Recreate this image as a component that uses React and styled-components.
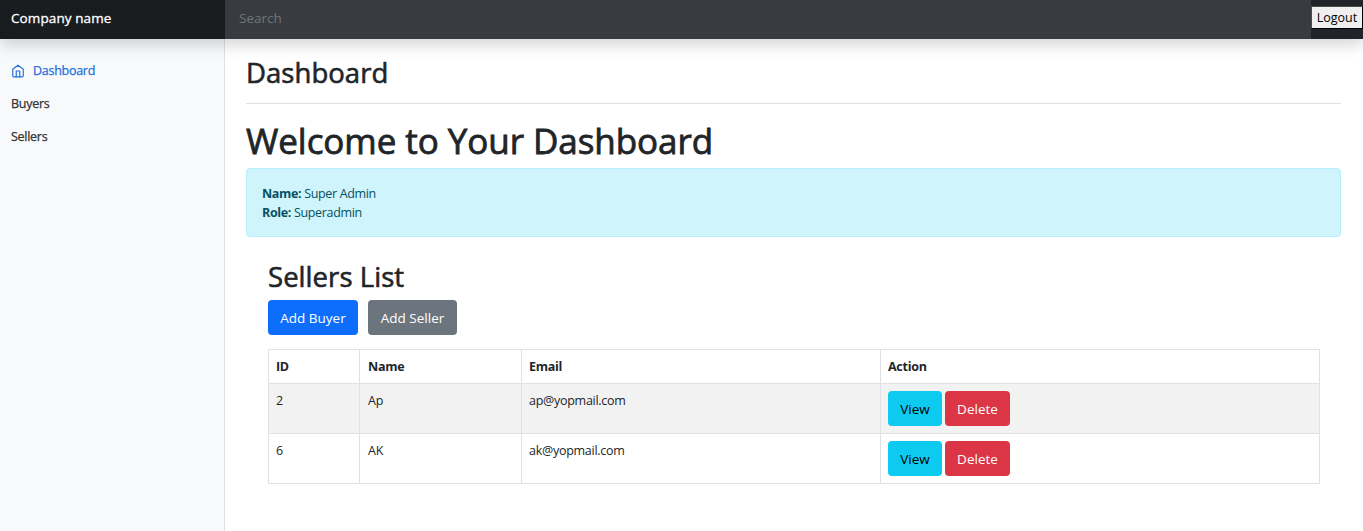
import React from "react";
import styled, { createGlobalStyle } from "styled-components";

const GlobalStyle = createGlobalStyle`
  *, *::before, *::after { box-sizing: border-box; }
  body {
    margin: 0;
    background: #fff;
    color: #212529;
    font-family: "Segoe UI", "Open Sans", "Noto Sans", sans-serif;
    font-size: 12.5px;
    line-height: 19px;
    overflow: hidden;
  }
`;

const Page = styled.div`
  display: flex;
  flex-direction: column;
  height: 531px;
`;

const Header = styled.header`
  display: flex;
  flex: none;
  height: 39px;
  background: #212529;
  box-shadow: 0 7px 14px rgba(0, 0, 0, 0.15);
  position: relative;
  z-index: 1;
`;

const Brand = styled.div`
  width: 225px;
  padding: 9px 11px;
  background: #191c1f;
  color: #fff;
  font-size: 13.5px;
  font-weight: 500;
  letter-spacing: 0.1px;
  -webkit-text-stroke: 0.3px currentColor;
`;

const Search = styled.input`
  flex: 1;
  min-width: 0;
  border: 0;
  outline: 0;
  padding: 0 14px 2px;
  background: #383b3f;
  color: #fff;
  font: inherit;
  font-size: 13.5px;
  &::placeholder { color: #6c757d; opacity: 1; }
`;

const SignOut = styled.div`
  width: 52px;
  padding: 6px 0 0;
`;

const LogoutButton = styled.button`
  display: block;
  width: 52px;
  height: 23px;
  padding: 0;
  border: 1px solid;
  border-color: #4c4c4c #000 #000 #4c4c4c;
  background: #efefef;
  color: #000;
  font: inherit;
  font-size: 12.5px;
  line-height: 20px;
`;

const Body = styled.div`
  display: flex;
  flex: 1;
`;

const Sidebar = styled.nav`
  width: 225px;
  padding: 15px 11px 0;
  border-right: 1px solid #dee2e6;
  background: #f8f9fa;
`;

const NavLink = styled.a`
  display: flex;
  align-items: center;
  gap: 8px;
  height: 33px;
  color: ${({ $active }) => ($active ? "#2470dc" : "#333")};
  font-weight: 500;
  letter-spacing: -0.27px;
  -webkit-text-stroke: 0.25px currentColor;
  svg { -webkit-text-stroke: 0; }
`;

const Main = styled.main`
  flex: 1;
  padding: 0 22px 0 21px;
`;

const PageHead = styled.div`
  height: 65px;
  padding-top: 16px;
  border-bottom: 1px solid #dee2e6;
`;

const Heading = styled.h2`
  margin: 0;
  font-size: 27.5px;
  font-weight: 500;
  line-height: 36px;
  letter-spacing: 0.05px;
  -webkit-text-stroke: 0.6px currentColor;
`;

const Welcome = styled.h1`
  margin: 16px 0 6px;
  font-size: 35px;
  font-weight: 500;
  line-height: 42px;
  letter-spacing: -0.06px;
  -webkit-text-stroke: 0.8px currentColor;
`;

const Alert = styled.div`
  height: 69px;
  padding: 15px;
  border: 1px solid #b6effb;
  border-radius: 4px;
  background: #cff4fc;
  color: #055160;
  letter-spacing: -0.34px;
`;

const Sellers = styled.section`
  padding: 22px 21px 0 22px;
`;

const Actions = styled.div`
  display: flex;
  gap: 3px;
`;

const Toolbar = styled.div`
  display: flex;
  gap: 10px;
  margin-top: 5px;
`;

const tones = {
  primary: ["#0d6efd", "#fff"],
  secondary: ["#6c757d", "#fff"],
  info: ["#0dcaf0", "#000"],
  danger: ["#dc3545", "#fff"],
};

const Button = styled.button`
  width: ${({ $width }) => $width}px;
  height: 35px;
  padding: 1px 0 0;
  border: 0;
  border-radius: 4px;
  background: ${({ $tone }) => tones[$tone][0]};
  color: ${({ $tone }) => tones[$tone][1]};
  font: inherit;
  font-size: 13.5px;
  line-height: 34px;
`;

const Table = styled.table`
  width: 1052px;
  margin-top: 14px;
  border-collapse: collapse;
  table-layout: fixed;
`;

const Row = styled.tr`
  height: ${({ $head }) => ($head ? 34 : 50)}px;
  background: ${({ $striped }) => ($striped ? "#f2f2f2" : "#fff")};
`;

const cell = `
  padding: 7px 7px 0;
  border: 1px solid #dee2e6;
  text-align: left;
  vertical-align: top;
  letter-spacing: -0.27px;
  &:nth-child(2) { padding-left: 8px; }
`;
const Th = styled.th`
  ${cell}
  font-weight: 700;
`;
const Td = styled.td`${cell}`;

const sellers = [
  { id: 2, name: "Ap", email: "ap@yopmail.com" },
  { id: 6, name: "AK", email: "ak@yopmail.com" },
];

const HomeIcon = () => (
  <svg width="14" height="14" viewBox="0 0 24 24" fill="none" stroke="currentColor" strokeWidth="2" strokeLinecap="round" strokeLinejoin="round">
    <path d="M3 9l9-7 9 7v11a2 2 0 0 1-2 2H5a2 2 0 0 1-2-2z" />
    <path d="M9 22V12h6v10" />
  </svg>
);

export default function App() {
  return (
    <Page>
      <GlobalStyle />
      <Header>
        <Brand>Company name</Brand>
        <Search placeholder="Search" />
        <SignOut><LogoutButton>Logout</LogoutButton></SignOut>
      </Header>
      <Body>
        <Sidebar>
          <NavLink $active><HomeIcon />Dashboard</NavLink>
          <NavLink>Buyers</NavLink>
          <NavLink>Sellers</NavLink>
        </Sidebar>
        <Main>
          <PageHead><Heading>Dashboard</Heading></PageHead>
          <Welcome>Welcome to Your Dashboard</Welcome>
          <Alert>
            <div><strong>Name:</strong> Super Admin</div>
            <div><strong>Role:</strong> Superadmin</div>
          </Alert>
          <Sellers>
            <Heading>Sellers List</Heading>
            <Toolbar>
              <Button $tone="primary" $width={90}>Add Buyer</Button>
              <Button $tone="secondary" $width={89}>Add Seller</Button>
            </Toolbar>
            <Table>
              <colgroup>
                <col width="91" /><col width="162" /><col width="359" /><col />
              </colgroup>
              <thead>
                <Row $head><Th>ID</Th><Th>Name</Th><Th>Email</Th><Th>Action</Th></Row>
              </thead>
              <tbody>
                {sellers.map((s, i) => (
                  <Row key={s.id} $striped={i % 2 === 0}>
                    <Td>{s.id}</Td>
                    <Td>{s.name}</Td>
                    <Td>{s.email}</Td>
                    <Td>
                      <Actions>
                        <Button $tone="info" $width={54}>View</Button>
                        <Button $tone="danger" $width={65}>Delete</Button>
                      </Actions>
                    </Td>
                  </Row>
                ))}
              </tbody>
            </Table>
          </Sellers>
        </Main>
      </Body>
    </Page>
  );
}
